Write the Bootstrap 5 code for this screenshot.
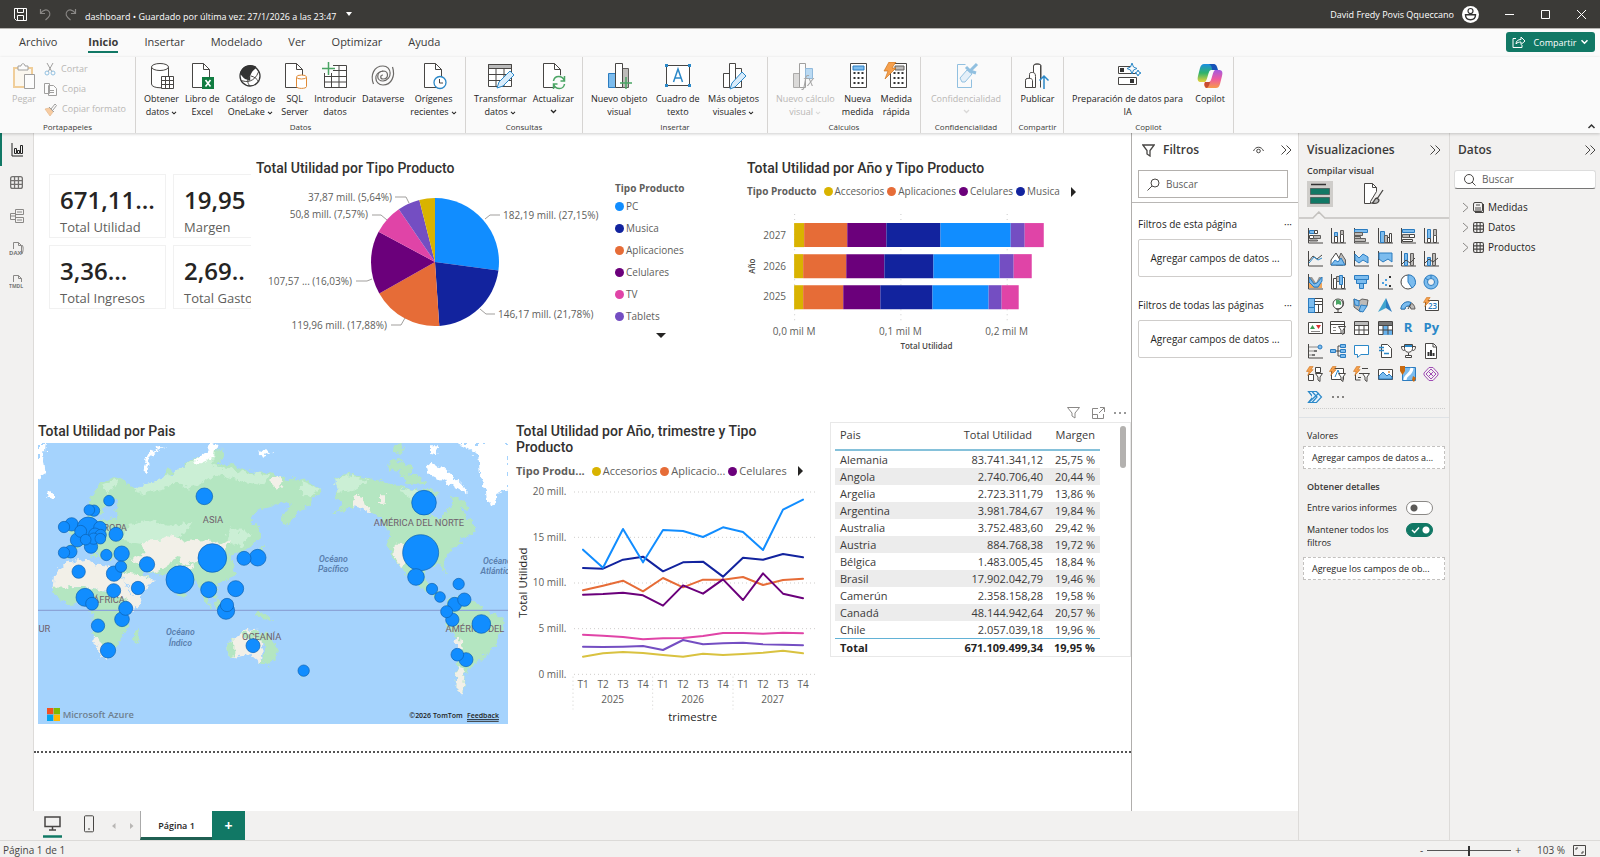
<!DOCTYPE html>
<html lang="es">
<head>
<meta charset="utf-8">
<meta name="viewport" content="width=device-width, initial-scale=1">
<title>dashboard</title>
<link rel="stylesheet" href="https://cdn.jsdelivr.net/npm/bootstrap@5.3.0/dist/css/bootstrap.min.css">
<style>
:root{--teal:#117865;--pane:#f2f1f0;--line:#dddbd9;--pc:#118dff;--mus:#12239e;--apl:#e66c37;--cel:#6b007b;--tv:#e044a7;--tab:#744ec2;--acc:#d9b300}
body{font-family:"Open Sans","Noto Sans",sans-serif;font-size:9px;line-height:13px;color:#252423;background:var(--pane);min-height:100vh}
button{font:inherit;color:inherit;background:none;border:0;padding:0}
svg{display:block;flex:none}
svg text{font-family:"Open Sans","Noto Sans",sans-serif}
.titlebar{height:28px;background:#3b3a37;color:#fff;padding-left:14px;padding-right:13px}
.undo{margin-left:12px}
.win svg{margin-left:25px}
.tabs{height:29px;background:#fafafa;border-top:1px solid #b5b3b0;padding:0 5px 0 6px}
.tabs a{font-size:11px;line-height:18px;padding:4px 13px 0;color:#3b3a39;text-decoration:none}
.tabs a:first-child{margin-right:5px}
.tabs a span{display:block;border-bottom:2px solid transparent}
.tabs a.active{font-weight:700}
.tabs a.active span{border-color:var(--teal)}
.share{background:var(--teal);color:#fff;border-radius:3px;height:20px;width:89px;margin-top:3px}
.ribbon{background:#fafafa;height:76px;box-shadow:0 1px 3px #0003;z-index:2}
.rgroup{border-right:1px solid #d6d4d2;height:76px;padding-top:2px}
.rgroup button{display:flex;flex-direction:column;align-items:center;text-align:center;line-height:13px}
.rgroup button>svg:first-child{margin:3px 0 2px}
.rgroup footer{font-size:8px;line-height:12px;text-align:center;color:#3b3a39}
.rgroup .cut button{flex-direction:row;gap:5px;line-height:20px}
.rgroup .cut button>svg:first-child{margin:0}
.off{color:#b9b7b5!important}.off svg{opacity:.5}
.w1{width:136px}.w2{width:330px}.w3{width:117px}.w4{width:185px}.w5{width:153px}.w6{width:91px}.w7{width:52px}.w8{width:170px}
.rail{flex:none;width:34px;border-right:1px solid var(--line)}
.rail button{height:33px;display:flex;align-items:center;justify-content:center}
.rail button.on{border-left:2px solid var(--teal);padding-right:2px}
.flexmin{min-width:0}
.report{background:#fff;border-bottom:2px dotted #555;height:620px}
.r1{display:grid;grid-template-columns:218fr 491fr 388fr;height:270px;padding-top:23px}
.r2{display:grid;grid-template-columns:478fr 313fr 306fr}
.vtitle{font:500 14px/16px Roboto,sans-serif;color:#323130;margin:0}
.wrapt{padding-right:40px}
.kpis{display:grid;grid-template-columns:117px 117px;gap:7px;margin:18px 1px 0 15px;overflow:hidden}
.kpi{border:1px solid #f1f1f1;height:64px;padding:9px 0 0 10px;overflow:hidden;white-space:nowrap}
.kpi b{display:block;font-size:24px;line-height:32px;font-weight:600;color:#252423}
.kpi span{display:block;font-size:13px;line-height:18px;color:#605e5c;margin-top:2px}
.lg{font-size:10px;color:#605e5c;white-space:nowrap}
.hlg{gap:3px;margin:9px 0 2px}
.lg11{font-size:11px}
.lg i{display:inline-block;width:9px;height:9px;border-radius:50%;margin-right:2px;vertical-align:-1px}
.c-pc{background:var(--pc)}.c-mus{background:var(--mus)}.c-apl{background:var(--apl)}.c-cel{background:var(--cel)}.c-tv{background:var(--tv)}.c-tab{background:var(--tab)}.c-acc{background:var(--acc)}
.lg b{font-weight:700}
.plg{width:110px;margin:2px 0 0 1px}
.plg div{line-height:22px;font-size:10px}
.plg .tri{margin:6px 0 0 41px}
.tri{width:0;height:0;border:5px solid transparent;border-bottom-width:0;border-top-color:#252423}
.trir{width:0;height:0;border:5px solid transparent;border-right-width:0;border-left-color:#252423}
.tbl{font-size:11px;line-height:17px;width:265px;color:#3b3a39;border-collapse:collapse}
.tbl th{font-weight:400;line-height:16px;height:24px;border-bottom:2px solid #85c1da;padding:0 5px 5px;white-space:nowrap}
.tbl td{padding:0 5px;height:17px;white-space:nowrap}
.tbl tbody tr:nth-child(even){background:#ececec}
.tbl .n{text-align:right}
.tbl .n:last-child{width:52px}
.tbl tfoot td{font-weight:700;color:#252423;border-top:1px solid #62b2d6;height:18px}
.tcard{border:1px solid #e8e8e8;padding:3px 4px;height:235px;margin-left:5px}
.vtools{padding:3px 4px 3px 0}
.thumbbar{width:6px;height:42px;border-radius:3px;background:#b3b1af}
.fpane{flex:none;width:167px;background:#fff;border-left:1px solid #b0aeac;padding:0 6px;font-size:10px}
.vpane,.dpane{flex:none;width:151px;border-left:1px solid var(--line)}
.dpane{font-size:10px}
.ph{font-size:12px;font-weight:600;line-height:20px;color:#3b3a39;padding-top:7px}
.semi{font-weight:600;color:#3b3a39}
.fs{height:28px;border:1px solid #b3b0ad;margin-top:10px}
.fs input,.ds input{border:0;outline:0;background:none;min-width:0;font-size:10px;color:#3b3a39}
.fs input::placeholder,.ds input::placeholder{color:#605e5c;opacity:1}
.fline{height:1px;background:#b9b7b5;margin:4px -6px}
.f1{margin-top:15px}
.f2{margin-top:22px}
.fbox{border:1px solid #cfcdcb;border-radius:2px;height:38px;line-height:36px;text-align:center;white-space:nowrap}
.ds{height:19px;background:#fff;border:1px solid #ddd;border-bottom:1px solid #777;border-radius:3px;margin:10px 4px 0}
.fields{line-height:20px}
.bsel{background:#cfcdca}
.dots{border-top:1px dotted #ccc}
.vis{display:grid;grid-template-columns:repeat(6,1fr);grid-auto-rows:23px;margin:5px 6px 0 4px}
.vis button{display:flex;align-items:center;justify-content:center}
.vis .ltr{font-size:13px;font-weight:700;color:#2b88c8}
.wells{padding:11px 4px 0}
.wells .semi{margin-top:11px}
.well{border:1px dashed #c3c1bf;background:#fff;height:23px;line-height:21px;white-space:nowrap;overflow:hidden;padding-left:8px}
.sw{appearance:none;flex:none;width:27px;height:14px;border:1px solid #8a8886;border-radius:7px;margin:0;background:radial-gradient(circle at 7px 6px,#5b5957 3px,#fff 4px)}
.sw:checked{border-color:var(--teal);background:radial-gradient(circle at 19px 6px,#fff 3px,transparent 4px),url("data:image/svg+xml,%3Csvg xmlns='http://www.w3.org/2000/svg' viewBox='0 0 25 12'%3E%3Cpath d='M5 6l2.500 2.500 4.500-5' fill='none' stroke='white' stroke-width='1.500'/%3E%3C/svg%3E") var(--teal)}
.ptabs{height:29px;padding-left:42px}
.phone{margin-left:20px}.arrows{margin-left:17px}
.ptab{background:#fff!important;width:72px;margin-left:6px;border-left:1px solid #aaa!important;border-bottom:3px solid #1f5f52!important;font-weight:600!important;padding-top:2px!important}
.plus{width:33px;background:var(--teal)!important;color:#fff!important;font-size:14px!important;font-weight:700!important}
.status{height:17px;border-top:1px solid #dcdad8;color:#484644;padding:3px 14px 0 3px;font-size:10px}
.zoomr{appearance:none;width:84px;height:11px;background:linear-gradient(#555,#555) center/100% 1px no-repeat}
.zoomr::-webkit-slider-thumb{appearance:none;width:2px;height:10px;background:#333}
/* icon strokes and fills */
.k{fill:none;stroke:#484644}.g{fill:none;stroke:#8a8886}.w{fill:#fff;stroke:#484644}.b{fill:#7cbcee;stroke:#2b7cc0}.bl{fill:none;stroke:#2b88c8}.a{fill:#bdbbb9;stroke:#605e5c}.o{fill:#f6a04d;stroke:#c8690f;stroke-width:.6}.gr{fill:none;stroke:#4aa564}
.land{fill:#b4e6c1}.sand{fill:#f2f0e8}.ice{fill:#fff}.tun{fill:#cbefd5}
.bub{fill:#118dff;stroke:#0c5fae;stroke-width:2}
.cont text{font:400 28px Roboto,sans-serif;fill:#6f5f6c}
.sea text{font:italic 600 26px Roboto,sans-serif;fill:#5a7fae}
.ax{font-size:30px;fill:#605e5c}
.s{fill:none;stroke-width:6;stroke-linejoin:round;stroke-linecap:round}
.dl{font-size:10px;fill:#605e5c}
</style>
</head>
<body class="d-flex flex-column">
<svg width="0" height="0" class="position-absolute" aria-hidden="true"><defs>
<symbol id="doc" viewBox="0 0 26 28"><path class="w" d="M3.500 1.500h11l6 6v18h-17z"/><path class="k" d="M14.500 1.500v6h6"/></symbol>
<symbol id="chev" viewBox="0 0 7 5"><path d="M1 1l2.500 2.500L6 1" fill="none" stroke="currentColor" stroke-width="1.300"/></symbol>
<symbol id="dbl" viewBox="0 0 12 12"><path class="k" d="M1.500 1.500L6 6l-4.500 4.500M6.500 1.500L11 6l-4.500 4.500"/></symbol>
<symbol id="bolt" viewBox="0 0 9 11"><path class="o" d="M4 .500h4L5.500 4H8L2 10.500 3.500 6H.500z"/></symbol>
<symbol id="fun" viewBox="0 0 8 9"><path class="w" d="M.500.500h7L5 4v4.500L3 7V4z"/></symbol>
<symbol id="grid" viewBox="0 0 10 10"><rect class="k" x=".500" y=".500" width="9" height="9" rx="1.500"/><path class="k" d="M.500 3.500h9M.500 6.500h9M3.500.500v9M6.500.500v9"/></symbol>
</defs></svg>

<header class="titlebar d-flex align-items-center">
<svg width="13" height="13" viewBox="0 0 13 13" fill="none" stroke="#fff"><path d="M.500.500h12v12H2.500l-2-2zM3.500.500v4h6v-4M3.500 12.500v-5h6v5"/></svg>
<svg class="undo" width="13" height="13" viewBox="0 0 13 13" fill="none" stroke="#8a8886" stroke-width="1.200"><path d="M1.500 1v4.500H6M1.500 5.500C4 1.500 8 1 10 3.500s1 5-3.500 8.500"/></svg>
<svg class="ms-2 me-2" width="17" height="13" viewBox="-4 0 17 13" fill="none" stroke="#8a8886" stroke-width="1.200"><path d="M11.500 1v4.500H7M11.500 5.500C9 1.500 5 1 3 3.500s-1 5 3.500 8.500"/></svg>
<span class="mt-1">dashboard • Guardado por última vez: 27/1/2026 a las 23:47</span>
<svg class="ms-2" width="8" height="8" viewBox="0 0 8 8"><path d="M1 2h6L4 6z" fill="#fff"/></svg>
<span class="ms-auto me-2">David Fredy Povis Qqueccano</span>
<svg width="17" height="17" viewBox="0 0 17 17"><circle cx="8.500" cy="8.500" r="8.500" fill="#fff"/><circle cx="8.500" cy="5" r="2.500" fill="none" stroke="#333" stroke-width="1.200"/><path d="M3.500 8.800h10c0 3-1.500 5-5 5s-5-2-5-5z" fill="none" stroke="#333" stroke-width="1.400"/></svg>
<div class="win d-flex"><svg width="11" height="11"><path d="M1 5.500h9" stroke="#fff"/></svg><svg width="11" height="11"><path d="M1.500 1.500h8v8h-8z" stroke="#fff" fill="none"/></svg><svg width="11" height="11"><path d="M1 1l9 9M10 1l-9 9" stroke="#fff"/></svg></div>
</header>

<nav class="tabs d-flex">
<a href="#"><span>Archivo</span></a><a href="#" class="active"><span>Inicio</span></a><a href="#"><span>Insertar</span></a><a href="#"><span>Modelado</span></a><a href="#"><span>Ver</span></a><a href="#"><span>Optimizar</span></a><a href="#"><span>Ayuda</span></a>
<button class="share ms-auto d-flex align-items-center justify-content-center gap-1"><svg width="14" height="12" viewBox="0 0 14 12" fill="none" stroke="#fff"><path d="M4 2.500H1v9h9V9M4 8c0-3 2-4.500 5-4.500v-2.500l4 4-4 3.500V6C7 6 5 6.500 4 8z"/></svg><span class="ms-1">Compartir</span><svg width="9" height="6" viewBox="0 0 7 5"><use href="#chev"/></svg></button>
</nav>

<section class="ribbon d-flex position-relative">
<div class="rgroup w1 d-flex flex-column"><div class="d-flex flex-grow-1 ps-2">
<button class="off px-1"><svg width="24" height="28" viewBox="0 0 24 28"><path d="M2 6h18v19H2z" fill="#fdf6e6" stroke="#e8a33d" stroke-width="2"/><path class="w" d="M6 8V4h3c0-3 4-3 4 0h3v4z"/><path class="w" d="M12.500 12.500h10v14h-10z"/></svg>Pegar</button>
<div class="cut d-flex flex-column ms-1"><button class="off"><svg width="12" height="14" viewBox="0 0 12 14"><path class="k" d="M3 1l5 9M9 1L4 10"/><circle class="bl" cx="3" cy="11" r="2"/><circle class="bl" cx="9" cy="11" r="2"/></svg>Cortar</button><button class="off"><svg width="13" height="13" viewBox="0 0 13 13"><path class="w" d="M.500.500h5v10h-5zM4.500 2.500h5l3 3v7h-8zM6 7.500h4M6 9.500h4"/></svg>Copia</button><button class="off"><svg width="13" height="13" viewBox="0 0 13 13"><path class="o" d="M1 6l4-1 4 4-3 4z"/><path class="k" d="M5 4l5 5M7 6l4-5 1.500 1.500L9 7"/></svg>Copiar formato</button></div></div><footer>Portapapeles</footer></div>

<div class="rgroup w2 d-flex flex-column"><div class="d-flex flex-grow-1 justify-content-between px-2">
<button><svg width="26" height="28" viewBox="0 0 26 28"><path class="w" d="M2.500 5v17c0 5 17 5 17 0V5"/><ellipse class="w" cx="11" cy="5" rx="8.500" ry="3.500"/><path class="w" d="M12.500 14.500h12v12h-12zM12.500 18.500h12M12.500 22.500h12M16.500 14.500v12M20.500 14.500v12"/></svg>Obtener<span>datos <svg class="d-inline" width="6" height="4"><use href="#chev"/></svg></span></button>
<button><svg width="26" height="28" viewBox="0 0 26 28"><use href="#doc"/><path d="M13 15h12v12H13z" fill="#107c41"/><path d="M16.500 18l5 6.500M21.500 18l-5 6.500" stroke="#fff" stroke-width="1.600"/></svg>Libro de<br>Excel</button>
<button><svg width="26" height="28" viewBox="0 0 26 28"><circle cx="13" cy="14" r="10" fill="#fff" stroke="#333" stroke-width="1.300"/><path d="M3 12C4 5 11 1 18 4c4 2-2 3-4 8-2 4 1 8-3 6-4-1-4-2-8-6z" fill="#333"/><path class="k" d="M3.500 18c6 3 14 2 18-8M13 24c-3-3-3-7 0-10M14 14c4 1 6 3 8 6"/></svg>Catálogo de<span>OneLake <svg class="d-inline" width="6" height="4"><use href="#chev"/></svg></span></button>
<button><svg width="26" height="28" viewBox="0 0 26 28"><use href="#doc"/><path d="M14.500 15v9.500c0 2.500 10 2.500 10 0V15" fill="#fff" stroke="#e08a36"/><ellipse cx="19.500" cy="15" rx="5" ry="2" fill="#fff" stroke="#e08a36"/></svg>SQL<br>Server</button>
<button><svg width="26" height="28" viewBox="0 0 26 28"><path class="w" d="M2.500 3.500h22v22h-22zM2.500 8.500h22M2.500 14.500h22M2.500 20h22M9.500 8.500v17M17 3.500v22"/><path d="M0 0h11v11H0z" fill="#fafafa"/><path d="M6.500 0v13M0 6.500h13" stroke="#4aa564" stroke-width="1.500"/></svg>Introducir<br>datos</button>
<button><svg width="26" height="28" viewBox="0 0 26 28" fill="none" stroke="#6b6967" stroke-width="1.200"><path d="M22.500 5c3 9-1 18-9.500 18-9 0-10-13 0-14 6 0 6 8 0 8-3 0-3-4 0-4"/><path d="M3.500 22C0 13 4 4 13 4c9 0 10 14 0 15-7 0-7-9 0-10"/></svg>Dataverse</button>
<button><svg width="26" height="28" viewBox="0 0 26 28"><use href="#doc"/><circle cx="19" cy="20.500" r="6" fill="#fff" stroke="#2b88c8" stroke-width="1.300"/><path class="k" d="M18.500 17v4h3.500"/></svg>Orígenes<span>recientes <svg class="d-inline" width="6" height="4"><use href="#chev"/></svg></span></button>
</div><footer>Datos</footer></div>

<div class="rgroup w3 d-flex flex-column"><div class="d-flex flex-grow-1 justify-content-between px-2">
<button><svg width="28" height="28" viewBox="0 0 28 28"><path class="w" d="M2.500 2.500h23v22h-23zM2.500 12.500h23M2.500 18.500h23M10 7v17M18 7v17"/><path d="M2.500 2.500h23v4h-23z" fill="#bbb" stroke="#484644"/><path d="M11 26l2-6L24 9l4 4-11 11z" fill="#d9ecfb" stroke="#2b88c8"/></svg>Transformar<span>datos <svg class="d-inline" width="6" height="4"><use href="#chev"/></svg></span></button>
<button><svg width="26" height="28" viewBox="0 0 26 28"><use href="#doc"/><circle cx="19" cy="20" r="7" fill="#fafafa"/><path d="M13.500 19c1-6 9-6 11 0M24.500 14v5h-4M24.500 22c-1 6-9 6-11 0M13.500 27v-5h4" class="gr" stroke-width="1.500"/></svg>Actualizar<svg class="mt-1" width="7" height="5"><use href="#chev"/></svg></button>
</div><footer>Consultas</footer></div>

<div class="rgroup w4 d-flex flex-column"><div class="d-flex flex-grow-1 justify-content-between px-2">
<button><svg width="26" height="28" viewBox="0 0 26 28"><path class="b" d="M2.500 11.500h7v14h-7z"/><path class="a" d="M16.500 6.500h6v19h-6z"/><path class="w" d="M9.500 1.500h7v24h-7z"/><path d="M20 15v12M14 21h12" stroke="#4aa564" stroke-width="1.500"/></svg>Nuevo objeto<br>visual</button>
<button><svg width="28" height="28" viewBox="0 0 28 28"><path class="w" d="M2.500 3.500h23v20h-23z"/><path d="M1 2h3v3H1zM24 2h3v3h-3zM1 22h3v3H1zM24 22h3v3h-3z" fill="#2b88c8"/><path d="M9.500 20L14 7l4.500 13M11 16h6" class="bl" stroke-width="1.500"/></svg>Cuadro de<br>texto</button>
<button><svg width="26" height="28" viewBox="0 0 26 28"><path class="w" d="M2.500 11.500h6v14h-6zM8.500 1.500h6v24h-6zM14.500 6.500h6v19h-6z"/><path d="M9 27l2-6 10-11 4 4-11 11z" fill="#d9ecfb" stroke="#2b88c8"/></svg>Más objetos<span>visuales <svg class="d-inline" width="6" height="4"><use href="#chev"/></svg></span></button>
</div><footer>Insertar</footer></div>

<div class="rgroup w5 d-flex flex-column"><div class="d-flex flex-grow-1 justify-content-between px-2">
<button class="off"><svg width="28" height="28" viewBox="0 0 28 28"><path class="a" d="M2.500 11.500h6v14h-6z"/><path class="w" d="M8.500 1.500h6v24h-6z"/><path class="b" d="M14.500 6.500h7v10h-7z"/><text x="12" y="24" font-size="14" font-style="italic" fill="#555">fx</text></svg>Nuevo cálculo<span>visual <svg class="d-inline" width="6" height="4"><use href="#chev"/></svg></span></button>
<button><svg width="26" height="28" viewBox="0 0 26 28"><path class="w" d="M5.500 1.500h16v24h-16z"/><path class="b" d="M8 4h11v4H8z"/><path d="M9.500 10v14M13.500 10v14M17.500 10v14" stroke="#333" stroke-width="2" stroke-dasharray="2 3"/></svg>Nueva<br>medida</button>
<button><svg width="26" height="28" viewBox="0 0 26 28"><path class="w" d="M7.500 1.500h16v24h-16z"/><path class="a" d="M12 4h9v4h-9z"/><path d="M11.500 10v14M15.500 10v14M19.500 10v14" stroke="#333" stroke-width="2" stroke-dasharray="2 3"/><path class="o" d="M6 0h7l-4 6h4L2 17l3-8H1z"/></svg>Medida<br>rápida</button>
</div><footer>Cálculos</footer></div>

<div class="rgroup w6 d-flex flex-column"><div class="d-flex flex-grow-1 justify-content-center"><button class="off"><svg width="26" height="28" viewBox="0 0 26 28"><path class="bl" d="M4.500 2.500h8M4.500 2.500v23h14v-8"/><path d="M9 20l-2-4 7-8 5 4-7 8z" fill="#cfe5f7" stroke="#2b88c8"/><path d="M13 5l4 4 7-7M17 9l6 2" class="bl" stroke-width="3"/></svg>Confidencialidad<svg class="mt-1" width="7" height="5"><use href="#chev"/></svg></button></div><footer>Confidencialidad</footer></div>

<div class="rgroup w7 d-flex flex-column"><div class="d-flex flex-grow-1 justify-content-center"><button><svg width="26" height="28" viewBox="0 0 26 28"><path class="w" d="M16.500 25.500v-22c0-2-7-2-7 0v7M1.500 25.500v-7c0-2 1-2 3-2h1v-4c0-2 1-2 3-2s3 1 3 4v11z"/><path class="w" d="M1.500 25.500v-7c0-3 7-3 7 0v7z"/><path d="M17 17V3.500c0-2-7-2-7 0" class="k"/><path d="M20 27V14M15.500 18.500L20 14l4.500 4.500" class="bl" stroke-width="1.500"/></svg>Publicar</button></div><footer>Compartir</footer></div>

<div class="rgroup w8 d-flex flex-column"><div class="d-flex flex-grow-1 justify-content-between px-2">
<button><svg width="26" height="28" viewBox="0 0 26 28"><path class="w" d="M3.500 4.500h12M3.500 4.500v7h18M3.500 15.500h18v7h-18z"/><path d="M5 6h4v4H5zM15 17h4v4h-4z" fill="#333"/><path class="bl" fill="#fff" d="M17 1l1.500 4L22 6.500 18.500 8 17 12l-1.500-4L12 6.500 15.500 5zM23 8l1 2 2 1-2 1-1 2-1-2-2-1 2-1z"/></svg>Preparación de datos para<br>IA</button>
<button><svg width="28" height="28" viewBox="0 0 28 28"><defs><linearGradient id="cpa" x1="0" y1="0" x2="0" y2="1"><stop offset="0" stop-color="#1a8fe3"/><stop offset=".5" stop-color="#2fb36a"/><stop offset="1" stop-color="#e8d23a"/></linearGradient><linearGradient id="cpb" x1="0" y1="0" x2="0" y2="1"><stop offset="0" stop-color="#a25be0"/><stop offset=".5" stop-color="#ee5aa0"/><stop offset="1" stop-color="#f79a4a"/></linearGradient></defs><path d="M8 2h9c2 0 3 2 3 4l-1 2h-4c-3 0-3 10-6 12H5c-3 0-4-2-3-6l2-8c1-3 2-4 4-4z" fill="url(#cpa)"/><path d="M13 2h5c2 0 3 2 4 6h-6c0-3-1-5-3-6z" fill="#1753b8"/><path d="M20 26h-9c-2 0-3-2-3-4l1-2h4c3 0 3-10 6-12h4c3 0 4 2 3 6l-2 8c-1 3-2 4-4 4z" fill="url(#cpb)"/><path d="M9 20h5c-1 4-2 6-4 6-1-1-2-3-1-6z" fill="#c74c31"/></svg>Copilot</button>
</div><footer>Copilot</footer></div>
<button class="ms-auto me-1 align-self-end mb-1" aria-label="Contraer"><svg width="9" height="6" viewBox="0 0 9 6"><path d="M1.500 5l3-3 3 3" fill="none" stroke="#333" stroke-width="1.500"/></svg></button>
</section>

<div class="d-flex flex-grow-1">
<div class="d-flex flex-column flex-grow-1 flexmin">
<div class="d-flex flex-grow-1">
<aside class="rail d-flex flex-column">
<button class="on" aria-label="Informe"><svg width="12" height="14" viewBox="0 0 12 14"><path d="M1 0v13h11M3.500 5.500h2v5h-2zM6.500 7.500h2v3h-2zM9.500 2.500h2v8h-2z" fill="none" stroke="#222"/></svg></button>
<button aria-label="Tabla"><svg width="13" height="13" viewBox="0 0 10 10"><use href="#grid" opacity=".75"/></svg></button>
<button aria-label="Modelo"><svg width="16" height="16" viewBox="0 0 16 16" class="g"><path d="M6.500 1.500h8v5h-8zM6.500 9.500h8v5h-8zM1.500 5.500h5v6h-5zM8 4h5M8 12h5M1.500 8h5"/></svg></button>
<button><svg width="16" height="16" viewBox="0 0 16 16"><path class="g" d="M4.500 8V1.500h5l3 3V13M9.500 1.500v3h3M13 4c2 2 1 7 0 9"/><text x="0" y="14" font-size="6" font-weight="700" fill="#777">DAX</text></svg></button>
<button><svg width="16" height="16" viewBox="0 0 16 16"><path class="g" d="M4.500 8V1.500h5l3 3V8M9.500 1.500v3h3"/><text x="0" y="14" font-size="5" font-weight="700" fill="#777">TMDL</text></svg></button>
</aside>

<main class="flex-grow-1 bg-white flexmin">
<div class="report">
<div class="r1">
<div class="kpis align-content-start">
<div class="kpi"><b>671,11...</b><span>Total Utilidad</span></div><div class="kpi"><b>19,95</b><span>Margen</span></div>
<div class="kpi"><b>3,36...</b><span>Total Ingresos</span></div><div class="kpi"><b>2,69..</b><span>Total Gasto</span></div>
</div>
<div class="ps-1 pt-1 flexmin">
<h2 class="vtitle mb-1">Total Utilidad por Tipo Producto</h2>
<div class="d-flex">
<svg class="flex-shrink-1" width="358" viewBox="257 180 358 164">
<g stroke="none"><path fill="#118dff" d="M436 262V198A64 64 0 0 1 499.400 270.600z"/><path fill="#12239e" d="M436 262L499.400 270.600A64 64 0 0 1 440.300 325.900z"/><path fill="#e66c37" d="M436 262L440.300 325.900A64 64 0 0 1 380.300 293.500z"/><path fill="#6b007b" d="M436 262L380.300 293.500A64 64 0 0 1 379.600 231.800z"/><path fill="#e044a7" d="M436 262L379.600 231.800A64 64 0 0 1 399.800 209.300z"/><path fill="#744ec2" d="M436 262L399.800 209.300A64 64 0 0 1 420.300 200z"/><path fill="#d9b300" d="M436 262L420.300 200A64 64 0 0 1 436 198z"/></g>
<path fill="none" stroke="#a19f9d" d="M396 197h11l3 6M373 215h9l6 5M357 281h11l5-2M392 325h10l4-7M501 215h-10l-5 4M496 314h-9l-6-5"/>
<g class="dl"><text x="504" y="219">182,19 mill. (27,15%)</text><text x="499" y="318">146,17 mill. (21,78%)</text><g text-anchor="end"><text x="393" y="201">37,87 mill. (5,64%)</text><text x="369" y="218">50,8 mill. (7,57%)</text><text x="353" y="285">107,57 ... (16,03%)</text><text x="388" y="329">119,96 mill. (17,88%)</text></g></g>
</svg>
<div class="lg plg"><b>Tipo Producto</b><div><i class="c-pc"></i>PC</div><div><i class="c-mus"></i>Musica</div><div><i class="c-apl"></i>Aplicaciones</div><div><i class="c-cel"></i>Celulares</div><div><i class="c-tv"></i>TV</div><div><i class="c-tab"></i>Tablets</div><div class="tri" role="button"></div></div>
</div></div>
<div class="ps-1 pt-1 flexmin">
<h2 class="vtitle">Total Utilidad por Año y Tipo Producto</h2>
<div class="lg hlg d-flex align-items-center"><b>Tipo Producto</b><span class="ms-1"><i class="c-acc"></i>Accesorios</span><span><i class="c-apl"></i>Aplicaciones</span><span><i class="c-cel"></i>Celulares</span><span><i class="c-mus"></i>Musica</span><span class="trir ms-2" role="button"></span></div>
<svg width="100%" viewBox="748 200 383 152">
<path d="M795.500 214v110M901.500 214v110M1007.500 214v110" stroke="#ccc" stroke-dasharray="1 4"/>
<g id="y2027"><path fill="#d9b300" d="M795 223h10v24h-10z"/><path fill="#e66c37" d="M805 223h43v24h-43z"/><path fill="#6b007b" d="M848 223h39v24h-39z"/><path fill="#12239e" d="M887 223h54v24h-54z"/><path fill="#118dff" d="M941 223h70v24h-70z"/><path fill="#744ec2" d="M1011 223h14v24h-14z"/><path fill="#e044a7" d="M1025 223h19v24h-19z"/></g>
<g id="y2026"><path fill="#d9b300" d="M795 254h9v24h-9z"/><path fill="#e66c37" d="M804 254h43v24h-43z"/><path fill="#6b007b" d="M847 254h38v24h-38z"/><path fill="#12239e" d="M885 254h49v24h-49z"/><path fill="#118dff" d="M934 254h66v24h-66z"/><path fill="#744ec2" d="M1000 254h14v24h-14z"/><path fill="#e044a7" d="M1014 254h18v24h-18z"/></g>
<g id="y2025"><path fill="#d9b300" d="M795 285h9v24h-9z"/><path fill="#e66c37" d="M804 285h40v24h-40z"/><path fill="#6b007b" d="M844 285h37v24h-37z"/><path fill="#12239e" d="M881 285h52v24h-52z"/><path fill="#118dff" d="M933 285h56v24h-56z"/><path fill="#744ec2" d="M989 285h13v24h-13z"/><path fill="#e044a7" d="M1002 285h17v24h-17z"/></g>
<g class="dl"><g text-anchor="end"><text x="787" y="239">2027</text><text x="787" y="270">2026</text><text x="787" y="300">2025</text></g><g text-anchor="middle"><text x="795" y="335">0,0 mil M</text><text x="901" y="335">0,1 mil M</text><text x="1007" y="335">0,2 mil M</text></g></g>
<g text-anchor="middle" font-size="8" font-weight="600" fill="#484644"><text x="927" y="349">Total Utilidad</text><text transform="translate(756 266) rotate(-90)">Año</text></g>
</svg></div>
</div>

<div class="r2">
<div class="ps-1 pt-3 pe-1 flexmin">
<h2 class="vtitle mt-1 mb-1">Total Utilidad por Pais</h2>
<svg width="100%" viewBox="24 98 1410 844">
<defs><filter id="coast" x="-5%" y="-5%" width="110%" height="110%"><feTurbulence type="fractalNoise" baseFrequency=".06" numOctaves="3" seed="4"/><feDisplacementMap in="SourceGraphic" scale="26" xChannelSelector="R" yChannelSelector="G"/></filter></defs>
<rect x="24" y="98" width="1410" height="844" fill="#a5d3fd"/>
<g filter="url(#coast)">
<path class="land" d="M112 442L108 405 140 400 135 378 120 368 150 355 175 335 172 318 185 312 190 330 240 328 262 318 250 300 268 275 255 265 235 285 215 305 200 318 190 290 172 280 195 245 215 212 250 200 285 208 300 225 325 240 355 222 385 212 405 215 410 172 425 180 418 210 440 190 465 160 490 150 520 135 545 120 580 115 580 140 560 165 600 160 640 175 680 190 720 185 770 205 830 208 870 235 875 250 840 265 845 280 815 300 790 320 770 345 758 345 760 310 785 285 760 270 720 290 680 300 660 330 690 350 690 390 660 410 640 420 650 450 635 455 620 425 600 430 610 460 615 490 590 510 560 520 565 545 555 560 540 545 530 560 545 590 555 605 530 580 515 540 500 510 480 520 458 565 440 540 425 510 410 490 370 490 350 480 330 465 345 495 370 505 350 530 310 550 290 520 275 490 270 465 280 450 235 445 225 430 215 445 195 415 180 400 205 440 190 440 170 405 150 405 125 440z"/>
<path class="tun" d="M410 200L465 165 520 140 560 125 545 165 640 185 720 195 700 225 640 215 560 190 520 215 470 235 440 215 400 235 330 250 310 235zM215 225l50-20-30 50zM300 340l60-10 60 15 70-10-30 40-60 10-70 15-60-10z"/>
<path class="tun" d="M820 215l50 20-30 25-40-25zM600 350l60 20-20 40-50-20z"/>
<path class="sand" d="M335 395L390 385 430 375 470 395 520 390 560 400 600 390 590 420 560 450 500 455 460 470 445 440 420 450 400 480 370 488 335 465 300 450 345 430zM275 485l40 5 60 15-25 30-40 20-25-40zM720 215l25-25 15 30-20 15zM485 455l-40 10 5 20 40-10z"/>
<path class="sand" d="M110 455L170 445 190 462 225 465 270 475 285 520 305 558 335 550 330 575 300 610 285 570 230 545 160 530 68 535 72 495z"/>
<path class="land" d="M68 532L160 530 230 545 285 565 300 580 290 615 295 650 275 680 262 710 235 740 222 742 205 690 187 670 188 620 178 590 150 580 110 585 85 565z"/>
<path class="sand" d="M190 680l15 0 20 40 5 25-18 0z"/>
<path class="land" d="M312 665l18-15-5 45-12 5zM112 365l8-40 18 30 0 15zM560 560l30 45-10 5-30-30zM675 600l35 12 20 20-30-5-25-15zM690 405l10 0-10 50-20 5 15-20z"/>
<path class="sand" d="M588 700L620 680 645 660 680 655 690 675 700 700 690 755 660 730 600 745z"/><path class="land" d="M588 700l25-15 0 55-15 3zM630 670l50-12 12 20 18-15 30 47 0 35-25 20-25-10 20-50-20-15-40-5zM815 770l12 15-15 20z"/>
<path class="ice" d="M24 98h24l-6 52 4 30-22 32zM405 108c-40 15-50 40-52 82l-12-10c5-40 20-65 64-72zM1285 98h149v142l-34 10-12 42-16-22-7-40-15-40-5-50-35-30zM685 120l40 5-30 15zM490 155l45-35 5-25 20 10-10 35-45 20zM50 250l25-2 0 12-20 8zM1190 160l50 10 60 55 15 30-60-35-60-30zM1200 105l25 0-5 30-20-5z"/>
<path class="land" d="M915 205L950 190 1000 200 1050 215 1110 225 1150 240 1200 235 1230 250 1190 280 1200 320 1245 320 1255 290 1290 290 1310 320 1340 350 1330 370 1290 385 1300 400 1265 415 1240 445 1248 490 1230 465 1190 470 1180 500 1200 530 1215 525 1240 570 1210 555 1160 520 1120 480 1085 440 1072 400 1080 370 1045 320 1000 290 960 290 910 310 940 280 910 260 930 235zM1075 150l45 0 30 25-20 20-55-20zM1110 195l50-5 30 30-60 5zM1090 105l30-3-5 25-25 0zM1260 250l40 20 20 25-50 0z"/>
<path class="sand" d="M985 250l20 25 20 30-55-15zM1095 400l25 0 15 50-20 25-25-40zM1050 255l15 0 0 25-15 0zM950 225l45-15-20 20z"/><path class="tun" d="M915 210l40-15 60 15-30 25-60 10zM1110 230l60 15 30 25-70-10z"/>
<path class="land" d="M1255 560L1290 555 1340 580 1370 600 1425 625 1420 655 1400 700 1360 740 1330 765 1305 790 1298 850 1280 840 1280 760 1285 690 1245 640 1245 600z"/><path class="sand" d="M1283 770l22 5-8 78-18-15zM1275 680l15 0 10 60-15 10z"/>
</g>
<path d="M24 600H1434" stroke="#8ba4d8" stroke-width="4"/>
<g class="cont" text-anchor="middle"><text x="549" y="337">ASIA</text><text x="1167" y="348">AMÉRICA DEL NORTE</text><text x="238" y="362">EUROPA</text><text x="237" y="577">ÁFRICA</text><text x="695" y="690">OCEANÍA</text><text x="1335" y="665">AMÉRICA DEL</text><text x="43" y="665">UR</text></g>
<g class="sea" text-anchor="middle"><text x="910" y="454">Océano</text><text x="910" y="485">Pacífico</text><text x="451" y="675">Océano</text><text x="451" y="706">Índico</text><text x="1402" y="460">Océano</text><text x="1402" y="490">Atlántico</text></g>
<g class="bub"><circle cx="237" cy="271" r="16"/><circle cx="192" cy="301" r="17"/><circle cx="178" cy="299" r="16"/><circle cx="125" cy="342" r="20"/><circle cx="102" cy="350" r="17"/><circle cx="175" cy="354" r="34"/><circle cx="210" cy="352" r="19"/><circle cx="258" cy="372" r="21"/><circle cx="142" cy="389" r="21"/><circle cx="152" cy="363" r="18"/><circle cx="195" cy="372" r="19"/><circle cx="212" cy="374" r="17"/><circle cx="183" cy="409" r="20"/><circle cx="191" cy="385" r="17"/><circle cx="167" cy="388" r="16"/><circle cx="211" cy="385" r="16"/><circle cx="122" cy="424" r="19"/><circle cx="102" cy="427" r="17"/><circle cx="229" cy="434" r="17"/><circle cx="275" cy="430" r="23"/><circle cx="351" cy="462" r="23"/><circle cx="146" cy="484" r="20"/><circle cx="252" cy="490" r="23"/><circle cx="273" cy="469" r="17"/><circle cx="251" cy="541" r="21"/><circle cx="324" cy="533" r="20"/><circle cx="165" cy="561" r="27"/><circle cx="186" cy="580" r="19"/><circle cx="276" cy="627" r="22"/><circle cx="287" cy="594" r="21"/><circle cx="204" cy="646" r="20"/><circle cx="234" cy="720" r="23"/><circle cx="523" cy="258" r="25"/><circle cx="547" cy="443" r="43"/><circle cx="450" cy="508" r="42"/><circle cx="683" cy="442" r="25"/><circle cx="642" cy="444" r="21"/><circle cx="536" cy="538" r="24"/><circle cx="617" cy="535" r="24"/><circle cx="588" cy="601" r="26"/><circle cx="591" cy="584" r="20"/><circle cx="669" cy="706" r="21"/><circle cx="821" cy="781" r="17"/><circle cx="1182" cy="277" r="37"/><circle cx="1172" cy="427" r="54"/><circle cx="1158" cy="500" r="25"/><circle cx="1206" cy="536" r="17"/><circle cx="1230" cy="560" r="16"/><circle cx="1286" cy="521" r="17"/><circle cx="1274" cy="582" r="21"/><circle cx="1303" cy="568" r="20"/><circle cx="1267" cy="628" r="20"/><circle cx="1250" cy="604" r="18"/><circle cx="1354" cy="641" r="28"/><circle cx="1308" cy="748" r="21"/><circle cx="1282" cy="733" r="19"/></g>
<path fill="#f25022" d="M51 893h19v19H51z"/><path fill="#7fba00" d="M71 893h19v19H71z"/><path fill="#00a4ef" d="M51 913h19v19H51z"/><path fill="#ffb900" d="M71 913h19v19H71z"/>
<text x="98" y="924" font-size="28" font-weight="600" fill="#6e7f8e">Microsoft Azure</text><text x="1138" y="924" font-size="21" font-weight="600" fill="#222">©2026 TomTom</text><a href="#"><text x="1311" y="924" font-size="21" font-weight="600" fill="#222">Feedback</text><path d="M1311 933h95" stroke="#333" stroke-width="3"/></a>
</svg></div>

<div class="ps-1 pt-3 flexmin">
<h2 class="vtitle wrapt mt-1">Total Utilidad por Año, trimestre y Tipo Producto</h2>
<div class="lg lg11 hlg d-flex align-items-center"><b>Tipo Produ...</b><span class="ms-1"><i class="c-acc"></i>Accesorios</span><span><i class="c-apl"></i>Aplicacio...</span><span><i class="c-cel"></i>Celulares</span><span class="trir ms-2" role="button"></span></div>
<svg width="100%" viewBox="33 207 927 735">
<path d="M207 246H930M207 382H930M207 519H930M207 656H930M207 793H930M204 800v98M443 800v98M684 800v98" stroke="#cfcdcb" stroke-width="3" stroke-dasharray="3 9"/>
<polyline class="s" stroke="#d9c240" points="234,740 294,730 354,726 414,729 474,735 534,740 594,731 654,735 714,732 774,728 834,722 894,730"/>
<polyline class="s" stroke="#744ec2" points="234,710 294,711 354,710 414,708 474,720 534,690 594,703 654,700 714,698 774,703 834,704 894,706"/>
<polyline class="s" stroke="#e044a7" points="234,674 294,677 354,681 414,688 474,685 534,684 594,678 654,669 714,669 774,671 834,668 894,670"/>
<polyline class="s" stroke="#e66c37" points="234,541 294,527 354,512 414,544 474,504 534,532 594,509 654,509 714,501 774,525 834,510 894,506"/>
<polyline class="s" stroke="#12239e" points="234,474 294,476 354,449 414,440 474,484 534,457 594,455 654,500 714,443 774,449 834,432 894,442"/>
<polyline class="s" stroke="#6b007b" points="234,554 294,552 354,548 414,556 474,587 534,526 594,551 654,508 714,570 774,490 834,551 894,565"/>
<polyline class="s" stroke="#118dff" points="234,419 294,473 354,357 414,457 474,360 534,363 594,381 654,352 714,366 774,420 834,299 894,269"/>
<g class="ax" text-anchor="end"><text x="184" y="256">20 mill.</text><text x="184" y="392">15 mill.</text><text x="184" y="529">10 mill.</text><text x="184" y="666">5 mill.</text><text x="184" y="803">0 mill.</text></g>
<g class="ax" text-anchor="middle"><text x="234" y="833">T1</text><text x="294" y="833">T2</text><text x="354" y="833">T3</text><text x="414" y="833">T4</text><text x="474" y="833">T1</text><text x="534" y="833">T2</text><text x="594" y="833">T3</text><text x="654" y="833">T4</text><text x="714" y="833">T1</text><text x="774" y="833">T2</text><text x="834" y="833">T3</text><text x="894" y="833">T4</text><text x="323" y="878">2025</text><text x="563" y="878">2026</text><text x="803" y="878">2027</text></g>
<g text-anchor="middle" fill="#252423" font-size="34"><text x="563" y="934" font-weight="500">trimestre</text><text transform="translate(66 518) rotate(-90)">Total Utilidad</text></g>
</svg></div>

<div class="d-flex flex-column flexmin">
<div class="vtools d-flex justify-content-end gap-2 align-items-center"><svg width="13" height="13" viewBox="0 0 13 13"><path class="g" d="M.500 1.500h12L8 7v5L5 10V7z"/></svg><svg class="ms-1" width="13" height="12" viewBox="0 0 13 12"><path class="g" d="M6 1.500H.500v10h11V7M.500 7.500h5v4M8 .500h4.500V5M12 1L7 6"/></svg><svg width="14" height="4" fill="#777"><circle cx="2" cy="2" r="1"/><circle cx="7" cy="2" r="1"/><circle cx="12" cy="2" r="1"/></svg></div>
<div class="tcard d-flex justify-content-between align-items-start">
<table class="tbl"><thead><tr><th>Pais</th><th class="n pe-3">Total Utilidad</th><th class="n">Margen</th></tr></thead>
<tbody><tr><td>Alemania</td><td class="n">83.741.341,12</td><td class="n">25,75 %</td></tr><tr><td>Angola</td><td class="n">2.740.706,40</td><td class="n">20,44 %</td></tr><tr><td>Argelia</td><td class="n">2.723.311,79</td><td class="n">13,86 %</td></tr><tr><td>Argentina</td><td class="n">3.981.784,67</td><td class="n">19,84 %</td></tr><tr><td>Australia</td><td class="n">3.752.483,60</td><td class="n">29,42 %</td></tr><tr><td>Austria</td><td class="n">884.768,38</td><td class="n">19,72 %</td></tr><tr><td>Bélgica</td><td class="n">1.483.005,45</td><td class="n">18,84 %</td></tr><tr><td>Brasil</td><td class="n">17.902.042,79</td><td class="n">19,46 %</td></tr><tr><td>Camerún</td><td class="n">2.358.158,28</td><td class="n">19,58 %</td></tr><tr><td>Canadá</td><td class="n">48.144.942,64</td><td class="n">20,57 %</td></tr><tr><td>Chile</td><td class="n">2.057.039,18</td><td class="n">19,96 %</td></tr></tbody>
<tfoot><tr><td>Total</td><td class="n">671.109.499,34</td><td class="n">19,95 %</td></tr></tfoot></table>
<div class="thumbbar"></div></div></div>
</div>
</div>
</main>

<aside class="fpane">
<div class="d-flex align-items-center ph"><svg class="ms-1" width="13" height="13" viewBox="0 0 13 13"><path class="k" stroke-width="1.300" d="M.800 1h11.400L8 6.500v5.500L5 10V6.500z"/></svg><span class="ms-2">Filtros</span><svg class="ms-auto" width="11" height="8" viewBox="0 0 11 8"><path class="k" d="M.500 5c2-5 8-5 10 0"/><circle class="k" cx="5.500" cy="5" r="1.800"/></svg><button class="ms-3" aria-label="Contraer filtros"><svg width="12" height="12"><use href="#dbl"/></svg></button></div>
<label class="fs d-flex align-items-center px-2 me-1"><svg width="13" height="13" viewBox="0 0 13 13"><circle class="k" cx="8" cy="5" r="4"/><path class="k" d="M5 8l-4.500 4.500"/></svg><input class="ms-1 w-100" placeholder="Buscar" aria-label="Buscar filtros"></label>
<div class="fline"></div>
<div class="d-flex justify-content-between f1 mb-2"><span>Filtros de esta página</span><span>···</span></div>
<div class="fbox">Agregar campos de datos ...</div>
<div class="d-flex justify-content-between f2 mb-2"><span>Filtros de todas las páginas</span><span>···</span></div>
<div class="fbox">Agregar campos de datos ...</div>
</aside>
</div>
<div class="ptabs d-flex align-items-stretch">
<button class="d-flex align-items-start pt-1" aria-label="Vista de escritorio"><svg width="21" height="23" viewBox="0 0 21 23"><path class="k" stroke-width="1.500" d="M3 2h15v9.500H3zM10.500 12v3M7 15h7"/><path d="M1 21.500h19" stroke="#117865" stroke-width="2.500"/></svg></button>
<button class="phone mb-1" aria-label="Vista móvil"><svg width="12" height="18" viewBox="0 0 12 18"><rect class="k" x="1.500" y=".800" width="9" height="16" rx="1"/><path class="k" d="M5 14h2"/></svg></button>
<button class="arrows" aria-label="Desplazar páginas"><svg width="22" height="8" viewBox="0 0 22 8"><path d="M3.500 1v6L0 4zM18 1v6l3.500-3z" fill="#b9b7b5"/></svg></button>
<button class="ptab">Página 1</button><button class="plus" aria-label="Nueva página">+</button>
</div>
</div>

<aside class="vpane">
<div class="d-flex align-items-center ph px-2 pb-0"><span>Visualizaciones</span><button class="ms-auto" aria-label="Contraer visualizaciones"><svg width="12" height="12"><use href="#dbl"/></svg></button></div>
<div class="semi px-2 mt-1">Compilar visual</div>
<div class="d-flex ps-2 mt-1"><button class="bsel" aria-label="Compilar"><svg width="26" height="26" viewBox="0 0 26 26"><path d="M4 3.500h15" stroke="#333" stroke-width="1.500"/><path d="M3.500 7.500h19v6h-19zM3.500 16.500h19v6h-19z" fill="#117865" stroke="#333" stroke-dasharray="1 1"/></svg></button><button class="ms-4 ps-1" aria-label="Formato"><svg width="26" height="24" viewBox="0 0 26 24"><path class="w" d="M3.500 1.500h8l4 4v4l-6 10v2h-6z"/><path class="k" d="M11.500 1.500v4h4"/><path d="M22 8l-6 9M16 16c-3 0-2 4-5 5 4 1 7 0 7-3z" fill="#bbb" stroke="#484644" stroke-width="1.300"/></svg></button></div>
<svg class="mt-1" width="100%" height="8" viewBox="0 0 151 8" preserveAspectRatio="none"><path d="M0 7h14l6-6 6 6h125" fill="#f2f1f0" stroke="#c3c1be" stroke-width="1.500"/></svg>
<div class="vis">
<button><svg width="16" height="16"><path class="k" d="M1.500 0v15H16"/><path class="b" d="M2.500 2.500h5v3h-5z"/><path class="w" d="M7.500 2.500h3v3h-3zM2.500 7.500h4v3h-4z"/><path class="a" d="M6.500 7.500h7v3h-7zM2.500 12h8v1h-8z"/></svg></button>
<button><svg width="16" height="16"><path class="k" d="M1.500 0v15H16"/><path class="b" d="M4.500 4.500h3v4h-3z"/><path class="w" d="M4.500 8.500h3v6h-3zM10.500 6.500h3v8h-3z"/><path class="a" d="M10.500 2.500h3v4h-3z"/></svg></button>
<button><svg width="16" height="16"><path class="k" d="M1.500 0v15H16"/><path class="b" d="M1.500 1.500h13v3h-13z"/><path class="a" d="M1.500 4.500h8v3h-8zM1.500 8.500h6v2h-6zM1.500 10.500h11v3h-11z"/></svg></button>
<button><svg width="16" height="16"><path class="k" d="M1.500 0v15H16"/><path class="b" d="M3.500 3.500h4v11h-4z"/><path class="a" d="M7.500 7.500h3v7h-3z"/><path class="w" d="M10.500 9.500h2v5h-2zM12.500 5.500h2v9h-2z"/></svg></button>
<button><svg width="16" height="16"><path class="k" d="M1.500 0v15H16"/><path class="b" d="M2.500 1.500h12v3h-12z"/><path class="a" d="M2.500 6.500h7v3h-7z"/><path class="w" d="M9.500 6.500h5v3h-5zM2.500 11.500h10v2h-10z"/></svg></button>
<button><svg width="16" height="16"><path class="k" d="M1.500 0v15H16"/><path class="b" d="M4.500 1.500h3v9h-3z"/><path class="w" d="M4.500 10.500h3v4h-3zM10.500 7.500h3v7h-3z"/><path class="a" d="M10.500 1.500h3v6h-3z"/></svg></button>

<button><svg width="16" height="16"><path class="k" d="M1.500 0v15H16M2 10l4-5 4 3 5-4"/><path class="bl" d="M2 12l5-6 4 3 4-2"/></svg></button>
<button><svg width="16" height="16"><path class="a" d="M6 14l5-12 4.500 7v5z"/><path class="w" d="M1 14L1 9 6 2l7 12z"/><path class="b" d="M1 14l4-5 3 2 3-4 4 7z"/></svg></button>
<button><svg width="16" height="16"><path class="k" d="M1.500 0v15H16"/><path class="b" d="M2 3l4 4 4-4 5 3v6l-5-3-4 3-4-3z"/></svg></button>
<button><svg width="16" height="16"><path class="k" d="M1.500 0v15H16"/><path class="b" d="M2 2h13v9l-4-3-5 3-4-3z"/></svg></button>
<button><svg width="16" height="16"><path class="k" d="M1.500 0v15H16"/><path class="b" d="M4.500 2.500h3v12h-3z"/><path class="a" d="M10.500 2.500h3v12h-3z"/><path class="k" d="M2 13l4-4 4 3 5-5"/></svg></button>
<button><svg width="16" height="16"><path class="k" d="M1.500 0v15H16"/><path class="b" d="M4.500 6.500h3v8h-3z"/><path class="a" d="M9.500 2.500h3v12h-3z"/><path class="k" d="M2 12l4-4 4 3 5-4"/></svg></button>

<button><svg width="16" height="16"><path d="M2 9h13v5H2z" fill="#f2a65a"/><path d="M2 3h3l4 6 3-6h3v4l-4 7H7L2 8z" fill="#9a9896"/><path class="b" d="M2 3l5 7 3-1 5-6v4l-4 6H7L2 8z"/><path class="k" d="M1.500 0v15H16"/></svg></button>
<button><svg width="16" height="16"><path class="k" d="M1.500 0v15H16"/><path class="w" d="M3.500 4.500h3v10h-3zM11.500 3.500h3v11h-3z"/><path class="a" d="M6.500 2.500h3v5h-3z"/><path class="b" d="M9.500 1.500h3v9h-3z"/></svg></button>
<button><svg width="16" height="16"><path class="b" d="M1.500 1.500h14v4h-14zM3.500 5.500h10v4h-10zM6.500 9.500h4v5h-4z"/></svg></button>
<button><svg width="16" height="16"><path class="k" d="M1.500 0v15H16"/><path d="M5 8h2v2H5zM8 5h2v2H8zM8 10h2v2H8z" fill="#4a9fe0"/><path d="M12 2h2v2h-2zM12 11h2v2h-2z" fill="#333"/></svg></button>
<button><svg width="16" height="16"><circle class="w" cx="8" cy="8" r="7"/><path class="b" d="M8 8V1a7 7 0 0 1 4 13z"/></svg></button>
<button><svg width="16" height="16"><circle class="b" cx="8" cy="8" r="7"/><circle cx="8" cy="8" r="3.500" fill="#f2f1f0" stroke="#2b7cc0"/><path d="M2 4l3 2M8 1v3" stroke="#2b7cc0"/></svg></button>

<button><svg width="16" height="16"><path class="w" d="M1.500 1.500h14v14h-14z"/><path class="b" d="M1.500 1.500h6v9h-6zM1.500 10.500h6v5h-6z"/><path class="k" d="M7.500 7.500h8M11.500 7.500v8M7.500 4.500h8"/></svg></button>
<button><svg width="16" height="16"><circle cx="8" cy="7" r="5" fill="#fff" stroke="#484644"/><path d="M6 3c4-1 6 2 5 5L8 7 6 8z" fill="#4aa564"/><path class="k" d="M12 2c4 5 0 11-6 10M8 12v3M4 15.500h8"/></svg></button>
<button><svg width="16" height="16"><path class="a" d="M1 2l5 2 3-2 6 1-1 6-4 1-2 5-3-2-4-3z"/><path class="b" d="M1 2l5 2v5L2 8zM8 8l6 1-4 6-4-1z"/></svg></button>
<button><svg width="16" height="16"><path d="M9 1l6 14-6-4z" fill="#2b7cc0"/><path d="M9 1L1 15l8-4z" fill="#41a5cf"/></svg></button>
<button><svg width="16" height="16"><path d="M1 12a7 7 0 0 1 14 0h-4a3 3 0 0 0-6 0z" class="a"/><path d="M1 12a7 7 0 0 1 10-6.500l-2 3.600A3 3 0 0 0 5 12z" class="b"/><path class="k" d="M8 12l3-5"/></svg></button>
<button><svg width="16" height="16"><path class="w" d="M2.500 3.500h13v10h-13z"/><text x="5" y="12" font-size="8" font-weight="600" fill="#2b7cc0">23</text><use href="#bolt" width="8" height="10"/></svg></button>

<button><svg width="16" height="16"><path class="w" d="M1.500 2.500h14v11h-14z"/><path d="M3 9l2.500-4L8 9z" fill="#3a9b50"/><path d="M9 5h5l-2.500 4z" fill="#d33"/><path class="g" d="M4 11.500h9"/></svg></button>
<button><svg width="16" height="16"><path class="w" d="M.500 1.500h14v12H.500zM.500 4.500h14"/><path class="g" d="M3 7.500h3M3 10.500h3"/><use href="#fun" x="8" y="6" width="8" height="9"/></svg></button>
<button><svg width="16" height="16"><path class="w" d="M1.500 1.500h14v13h-14zM1.500 5.500h14M1.500 10h14M6 1.500v13M11 1.500v13"/><path d="M2 2h13v3H2z" fill="#bbb"/></svg></button>
<button><svg width="16" height="16"><path class="w" d="M1.500 1.500h14v13h-14z"/><path d="M6 6h5v9H6zM11 10h4v5h-4z" fill="#69b1ea"/><path class="k" d="M1.500 5.500h14M1.500 10h14M6 1.500v13M11 1.500v13"/><path d="M2 2h13v3H2z" fill="#777"/></svg></button>
<button class="ltr">R</button>
<button class="ltr">Py</button>

<button><svg width="16" height="16"><path class="k" d="M1.500 1v14H16"/><path class="g" d="M2 4h9M2 8h6M2 12h3"/><circle class="b" cx="13" cy="4" r="2"/><path d="M7 7h3v2H7zM5 11h3v2H5z" fill="#777"/></svg></button>
<button><svg width="16" height="16"><path class="k" d="M5 8h5M8 3v10M8 3h2M8 13h2"/><path class="b" d="M.500 6.500h5v3h-5zM10.500 1.500h5v3h-5zM10.500 6.500h5v3h-5zM10.500 11.500h5v3h-5z"/></svg></button>
<button><svg width="16" height="16"><path d="M1.500 2.500h14v9H8l-3.500 3v-3h-3z" fill="#fff" stroke="#2b88c8"/></svg></button>
<button><svg width="16" height="16"><path class="w" d="M4.500 1.500h6l4 4v9h-10z"/><path class="bl" d="M2 4.500h5M2 7.500h5M7 10.500h5" stroke-width="1.500"/></svg></button>
<button><svg width="16" height="16"><path class="w" d="M4.500 1.500h8v4c0 5-8 5-8 0zM4.500 3.500h-3c0 3 1 4 3 4M12.500 3.500h3c0 3-1 4-3 4M8.500 10v3M5.500 14.500h6v-2h-6z"/><path d="M5 2h7v2H5z" fill="#2b88c8"/></svg></button>
<button><svg width="16" height="16"><path class="w" d="M2.500.500h8l3 3v12h-11z"/><path d="M10 1v3h3" class="k"/><path d="M5.500 13V9M8 13V7M10.500 13v-3" stroke="#333" stroke-width="2"/></svg></button>

<button><svg width="17" height="16"><path class="w" d="M2.500 8.500h5v6h-5zM9.500 1.500h5v5h-5z"/><use href="#bolt" width="8" height="10"/><use href="#fun" x="9" y="7" width="8" height="9"/></svg></button>
<button><svg width="17" height="16"><path class="w" d="M2.500 2.500h12v11h-12z"/><path class="bl" d="M6 11l3-7 2 5"/><use href="#bolt" width="8" height="10"/><use href="#fun" x="9" y="7" width="8" height="9"/></svg></button>
<button><svg width="17" height="16"><path class="k" d="M2.500 8v6h5M9 2.500h6M6 7.500h5M5 11.500h3"/><use href="#bolt" width="8" height="10"/><use href="#fun" x="9" y="7" width="8" height="9"/></svg></button>
<button><svg width="16" height="16"><path class="w" d="M1.500 3.500h14v10h-14z"/><path class="b" d="M2 13v-3l4-4 4 4 2-2 3 3v2z"/><circle cx="12" cy="6" r="1" fill="#e08a36"/></svg></button>
<button><svg width="16" height="16"><path class="b" d="M2.500 1.500h13v13h-13z"/><path d="M5 14c0-6 6-4 7-12" stroke="#fff" stroke-width="3" fill="none"/><path d="M0 0h5v5L2.500 9 0 5zM13 10l3 2-2 4-2-2z" fill="#c8690f"/></svg></button>
<button><svg width="16" height="16" fill="none" stroke="#a04fb5"><path d="M6 1.500h4L15 7v2l-5 5.500H6L1 9V7z"/><path d="M8 3l2.500 2.500L8 8 5.500 5.500zM8 8l2.500 2.500L8 13l-2.500-2.500zM5.500 5.500L8 8l-2.500 2.500L3 8zM10.500 5.500L13 8l-2.500 2.500L8 8z"/></svg></button>
<button><svg width="16" height="16" fill="#e4f2fd" stroke="#2b88c8" stroke-width="1.200"><path d="M1.500 2.500h8l5 5.500-5 5.500h-8L6 8z"/><path d="M5 2.500L10 8l-5 5.500M2 13L12 4"/></svg></button>
<button><svg width="14" height="4" fill="#605e5c"><circle cx="2" cy="2" r="1"/><circle cx="7" cy="2" r="1"/><circle cx="12" cy="2" r="1"/></svg></button>
</div>
<div class="dots mx-1 pb-2"></div>
<div class="border-top wells">
<div class="ps-1 mb-1">Valores</div>
<div class="well">Agregar campos de datos a...</div>
<div class="semi ps-1 mb-2">Obtener detalles</div>
<div class="d-flex justify-content-between ps-1 pe-2 me-1 mb-2"><label for="s1">Entre varios informes</label><input id="s1" type="checkbox" role="switch" class="sw"></div>
<div class="d-flex justify-content-between ps-1 pe-2 me-1 mb-2"><label for="s2">Mantener todos los<br>filtros</label><input id="s2" type="checkbox" role="switch" class="sw" checked></div>
<div class="well">Agregue los campos de ob...</div>
</div>
</aside>

<aside class="dpane">
<div class="d-flex align-items-center ph ps-2 pe-1"><span>Datos</span><button class="ms-auto" aria-label="Contraer datos"><svg width="12" height="12"><use href="#dbl"/></svg></button></div>
<label class="ds d-flex align-items-center px-2"><svg width="13" height="13" viewBox="0 0 13 13"><circle class="k" cx="6" cy="6" r="4.500"/><path class="k" d="M9 9l3.500 3.500"/></svg><input class="ms-1 w-100" placeholder="Buscar" aria-label="Buscar datos"></label>
<ul class="fields list-unstyled mt-2 ps-2 mb-0">
<li class="d-flex align-items-center gap-1"><svg class="ms-1" width="7" height="11"><path class="g" d="M1 1l5 4.500L1 10"/></svg><svg width="11" height="11" viewBox="0 0 11 11"><rect class="k" x=".500" y=".500" width="9" height="9" rx="1.500"/><path class="k" d="M10.500 2v8.500H2M3 3h4M3 5v4M5 5v4M7 5v4"/></svg><span>Medidas</span></li>
<li class="d-flex align-items-center gap-1"><svg class="ms-1" width="7" height="11"><path class="g" d="M1 1l5 4.500L1 10"/></svg><svg width="11" height="11"><use href="#grid"/></svg><span>Datos</span></li>
<li class="d-flex align-items-center gap-1"><svg class="ms-1" width="7" height="11"><path class="g" d="M1 1l5 4.500L1 10"/></svg><svg width="11" height="11"><use href="#grid"/></svg><span>Productos</span></li>
</ul>
</aside>
</div>

<footer class="status d-flex align-items-center"><span>Página 1 de 1</span>
<span class="ms-auto">-</span><input type="range" class="zoomr mx-1" aria-label="Zoom" value="50"><span class="me-3">+</span><span class="me-2">103 %</span><svg width="13" height="11" viewBox="0 0 13 11"><path class="k" d="M.500.500h12v10H.500zM3 5V3h2M10 6v2H8"/></svg></footer>
<script src="https://cdn.jsdelivr.net/npm/bootstrap@5.3.0/dist/js/bootstrap.bundle.min.js"></script>
</body>
</html>
